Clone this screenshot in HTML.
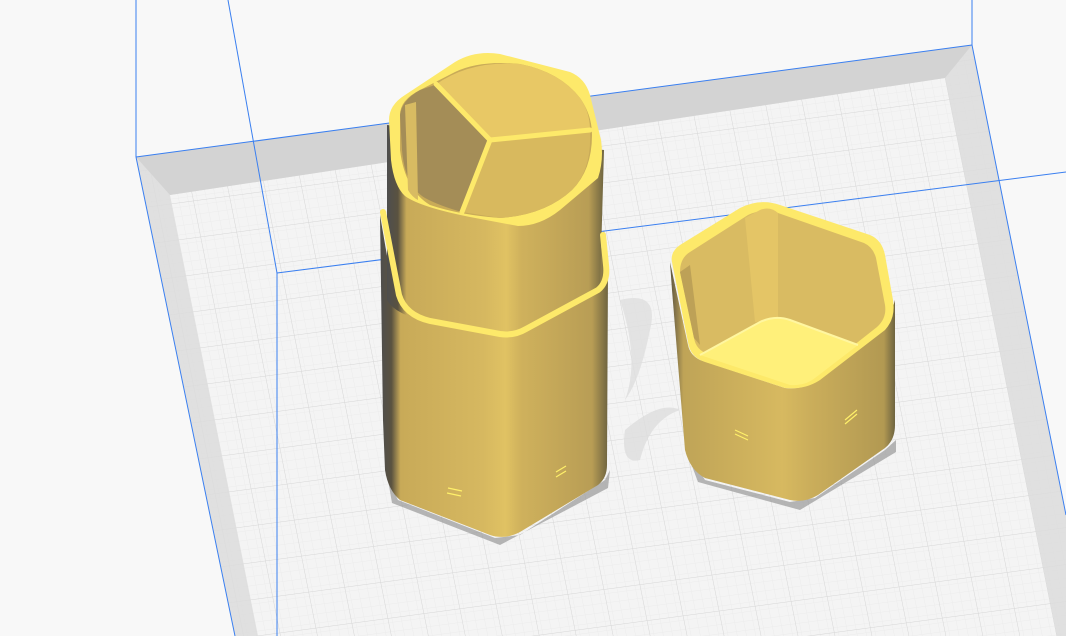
<!DOCTYPE html>
<html><head><meta charset="utf-8"><style>
html,body{margin:0;padding:0;background:#f8f8f8;width:1066px;height:636px;overflow:hidden}
svg{display:block}
</style></head><body>
<svg width="1066" height="636" viewBox="0 0 1066 636" xmlns="http://www.w3.org/2000/svg">
<defs>
<pattern id="fine" width="9" height="9" patternUnits="userSpaceOnUse" patternTransform="matrix(1,-0.134,0.2,1,0,0)">
<path d="M0 0H9M0 0V9" stroke="#ececec" stroke-width="1" fill="none"/>
</pattern>
<pattern id="grid" width="36" height="36" patternUnits="userSpaceOnUse" patternTransform="matrix(1,-0.134,0.2,1,6,4)">
<path d="M0 0H36M0 0V36" stroke="#d6d6d6" stroke-width="1" fill="none"/>
</pattern>
<clipPath id="plate"><polygon points="136,157 972,45 1066,515 1066,636 235,636"/></clipPath>
<linearGradient id="body" x1="0" x2="1" y1="0" y2="0">
<stop offset="0" stop-color="#4e4e4e"/><stop offset="0.05" stop-color="#5a5240"/><stop offset="0.09" stop-color="#c8aa58"/>
<stop offset="0.45" stop-color="#d6b860"/><stop offset="0.55" stop-color="#e0c263"/><stop offset="0.62" stop-color="#cfb15c"/>
<stop offset="0.93" stop-color="#b89d55"/><stop offset="1" stop-color="#6e6440"/></linearGradient>
<linearGradient id="lid" x1="0" x2="1" y1="0" y2="0">
<stop offset="0" stop-color="#5c5440"/><stop offset="0.06" stop-color="#bfa457"/><stop offset="0.5" stop-color="#d7b960"/>
<stop offset="0.62" stop-color="#cbae5b"/><stop offset="0.95" stop-color="#b29952"/><stop offset="1" stop-color="#6e6440"/></linearGradient>
</defs>
<g clip-path="url(#plate)">
<rect width="1066" height="636" fill="#f4f4f4"/>
<rect width="1066" height="636" fill="url(#fine)"/>
<rect width="1066" height="636" fill="url(#grid)"/>
<polygon points="136,157 972,45 1066,515 1066,636 1057,636 945,78 170,195 258,636 235,636" fill="#dcdcdc" opacity="0.85"/>
<polygon points="136,157 972,45 945,78 170,195" fill="#d3d3d3"/>
</g>
<g stroke="#3a7ff0" stroke-width="1" fill="none">
<line x1="136" y1="0" x2="136" y2="157"/>
<line x1="972" y1="0" x2="972" y2="45"/>
<line x1="136" y1="157" x2="972" y2="45"/>
<line x1="136" y1="157" x2="235" y2="636"/>
<line x1="972" y1="45" x2="1066" y2="515"/>
<line x1="228" y1="0" x2="277" y2="273"/>
<line x1="277" y1="273" x2="277" y2="636"/>
<line x1="277" y1="273" x2="1066" y2="172"/>
</g>
<path d="M388,480 L392,503 L500,545 L608,488 L610,470 L605,480 L520,535 L495,538 L398,500Z" fill="#999" opacity="0.7"/>
<path d="M686,450 L698,482 L800,510 L896,452 L896,440 L885,450 L815,498 L790,502 L705,480Z" fill="#999" opacity="0.7"/>
<g fill="#dedede" opacity="0.8"><path d="M620,300 Q660,290 650,330 Q640,380 625,400 Q640,360 620,300Z"/><path d="M625,430 Q660,400 680,410 Q650,420 640,460 Q620,465 625,430Z"/></g>
<path d="M380,215 L383,420 L385,470 Q388,490 400,500 L490,535 Q505,540 520,532 L598,485 Q607,478 607,465 L608,270 L604,230 L600,255 Q540,300 505,335 L420,310 Q395,300 392,285Z" fill="url(#body)"/>
<path d="M387,125 L387,300 Q395,315 430,322 L500,335 L525,330 L600,290 L604,150 Z" fill="url(#body)"/>
<path d="M383,212 L399,295 Q405,315 430,321 L500,334 Q514,336 526,329 L598,290 Q608,282 606,265 L603,235" fill="none" stroke="#fde96a" stroke-width="6" stroke-linecap="round"/>
<path d="M389,120 Q389,105 405,95 L455,62 Q475,50 500,54 L570,72 Q585,78 590,95 L601,140 Q604,160 598,178 L560,210 Q540,226 518,226 L470,217 Q420,207 405,196 Q394,186 391,160 Z" fill="#fde96a"/>
<path d="M400,115 Q400,100 420,90 L455,72 Q480,60 520,64 Q560,72 580,98 Q592,115 592,135 Q592,170 572,190 Q545,215 500,218 Q460,215 430,205 Q405,190 400,150 Z" fill="#c9ab58"/>
<path d="M435,85 L490,140 L462,212 Q440,206 425,198 Q405,186 402,150 L400,115 Q402,100 420,90Z" fill="#a48d57"/>
<path d="M405,105 L408,190 Q412,197 418,200 L416,102Z" fill="#d8bb62"/>
<path d="M435,85 Q470,60 520,64 Q560,72 580,98 Q590,112 590,130 L490,140Z" fill="#e8c865"/>
<path d="M490,140 L590,130 Q592,170 572,190 Q545,215 500,218 L462,212Z" fill="#d8b95e"/>
<path d="M436,84 L490,140 L590,130 M490,140 L462,212" stroke="#fde96a" stroke-width="5" fill="none" stroke-linecap="round"/>
<g stroke="#fff06a" stroke-width="1.2"><line x1="448" y1="488" x2="462" y2="491"/><line x1="447" y1="493" x2="461" y2="496"/><line x1="556" y1="472" x2="566" y2="466"/><line x1="556" y1="477" x2="566" y2="471"/></g>
<path d="M670,262 L672,290 L685,450 Q690,470 705,478 L790,500 Q805,503 818,495 L885,448 Q895,440 895,425 L895,300 Q890,320 875,335 L815,382 Q800,390 785,388 L700,360 Q690,355 688,345 Z" fill="url(#lid)"/>
<path d="M672,262 Q670,252 680,245 L740,208 Q760,198 780,205 L870,235 Q882,240 885,255 L893,300 Q896,318 885,330 L820,380 Q805,390 785,388 L705,362 Q690,357 688,342 Z" fill="#fde96a"/>
<path d="M680,272 Q680,258 690,252 L748,215 Q762,208 778,213 L864,243 Q873,247 876,258 L885,305 Q887,318 877,327 L820,372 Q806,382 790,380 L708,354 Q696,350 694,338 Z" fill="#d9bb62"/>
<path d="M745,218 L760,210 Q770,206 778,213 L778,320 L755,322Z" fill="#e4c566"/>
<path d="M680,272 L694,338 L700,345 L690,265Z" fill="#bda157"/>
<path d="M700,355 L760,322 Q775,315 790,320 L858,345 L815,378 Q805,386 790,385Z" fill="#fff07a"/>
<path d="M700,355 L760,322 Q775,315 790,320 L858,345" fill="none" stroke="#fff6a0" stroke-width="2"/>
<g stroke="#fff06a" stroke-width="1.2"><line x1="735" y1="430" x2="748" y2="436"/><line x1="735" y1="434" x2="748" y2="440"/><line x1="845" y1="420" x2="857" y2="410"/><line x1="845" y1="424" x2="857" y2="414"/></g>
</svg>
</body></html>
